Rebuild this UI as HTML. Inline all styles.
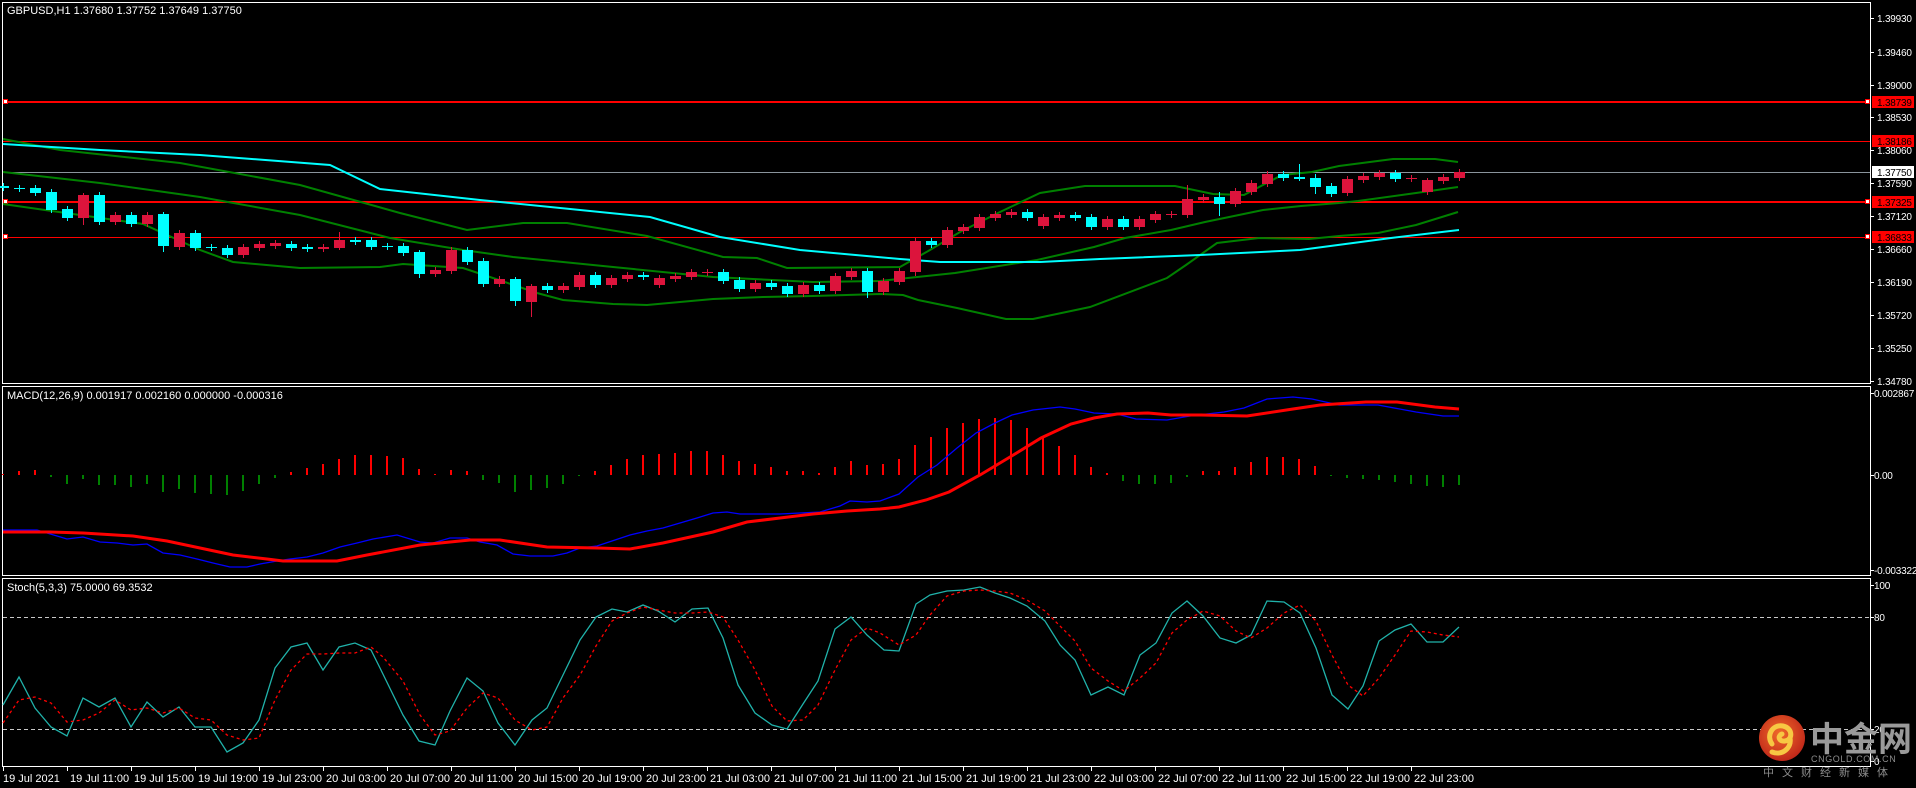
<!DOCTYPE html>
<html><head><meta charset="utf-8"><style>
html,body{margin:0;padding:0;background:#000;}
body{width:1916px;height:788px;overflow:hidden;position:relative;font-family:"Liberation Sans",Tahoma,sans-serif;}
svg{position:absolute;left:0;top:0;}
</style></head><body>
<svg id="s" width="1916" height="788" viewBox="0 0 1916 788" xmlns="http://www.w3.org/2000/svg" shape-rendering="crispEdges">
<rect width="1916" height="788" fill="#000"/>
</svg>
<script>
var s=document.getElementById('s');var NS='http://www.w3.org/2000/svg';
function el(t,a,txt){var e=document.createElementNS(NS,t);for(var k in a)e.setAttribute(k,a[k]);if(txt!==undefined)e.textContent=txt;s.appendChild(e);return e;}
function pl(pts,c,w,dash){el('polyline',{points:pts.map(function(p){return p.join(',')}).join(' '),fill:'none',stroke:c,'stroke-width':w,'stroke-dasharray':dash||'none','shape-rendering':'auto'});}
el('rect',{x:2.5,y:2.5,width:1868,height:381,fill:'none',stroke:'#fff'});
el('rect',{x:2.5,y:386.5,width:1868,height:189,fill:'none',stroke:'#fff'});
el('rect',{x:2.5,y:578.5,width:1868,height:188,fill:'none',stroke:'#fff'});
el('rect',{x:3,y:101,width:1867,height:2,fill:'#ff0000'});
el('rect',{x:3,y:141,width:1867,height:1,fill:'#ff0000'});
el('rect',{x:3,y:172,width:1867,height:1,fill:'#8a949c'});
el('rect',{x:3,y:201,width:1867,height:2,fill:'#ff0000'});
el('rect',{x:3,y:237,width:1867,height:1,fill:'#ff0000'});
[102,202,237].forEach(function(y){el('rect',{x:3.5,y:y-2.5,width:4,height:4,fill:'#fff',stroke:'#ff0000'});el('rect',{x:1865.5,y:y-2.5,width:4,height:4,fill:'#fff',stroke:'#ff0000'});});
pl([[3,139],[60,150],[180,163],[300,185],[400,213],[467,230],[523,223],[567,223],[647,236],[723,257],[757,258],[787,268],[900,267],[930,250],[960,232],[1000,212],[1040,193],[1085,186],[1175,186],[1213,194],[1244,195],[1282,175],[1312,172],[1339,166],[1393,159],[1435,159],[1458,162]],'#008000',2);
pl([[3,172],[100,183],[200,197],[300,215],[390,238],[463,250],[513,257],[613,267],[713,277],[813,282],[880,281],[955,273],[1037,260],[1094,247],[1125,238],[1171,230],[1205,222],[1263,210],[1301,206],[1339,203],[1358,201],[1416,193],[1458,187]],'#008000',2);
pl([[3,204],[143,224],[200,250],[233,262],[300,268],[380,267],[403,264],[463,268],[490,277],[537,293],[563,300],[613,304],[647,305],[713,299],[763,297],[813,296],[880,294],[903,295],[918,300],[957,308],[1006,319],[1033,319],[1090,307],[1167,278],[1186,265],[1217,243],[1259,238],[1309,239],[1339,236],[1378,233],[1416,225],[1458,212]],'#008000',2);
pl([[3,144],[100,150],[200,155],[330,165],[380,189],[480,200],[650,217],[720,237],[800,250],[900,259],[940,262],[1040,262],[1100,259],[1200,255],[1300,250],[1391,238],[1459,230]],'#00ffff',2);
var C=[['c',186,188],['c',188,189],['c',188,193],['c',192,210],['c',209,218],['r',195,218],['c',195,222],['r',215,222],['c',215,224],['r',215,224],
['c',214,246],['r',233,247],['c',233,248],['c',247,248],['c',248,255],['r',247,255],['r',244,248],['r',243,246],['c',244,248],['c',247,249],
['r',247,249],['r',240,248],['c',240,242],['c',240,247],['c',246,247],['c',246,253],['c',252,274],['r',270,274],['r',250,271],['c',250,262],
['c',261,284],['r',279,284],['c',279,301],['r',286,302],['c',286,290],['r',286,290],['r',275,287],['c',275,285],['r',278,285],['r',275,279],
['c',275,277],['r',278,285],['r',276,279],['r',272,277],['r',272,273],['c',272,281],['c',280,289],['r',283,289],['c',283,287],['c',286,294],
['r',285,294],['c',285,291],['r',276,291],['r',271,277],['c',271,292],['r',281,292],['r',271,282],['r',241,272],['c',241,245],['r',230,245],
['r',227,231],['r',217,228],['r',214,218],['r',212,215],['c',212,218],['r',217,226],['r',215,218],['c',215,218],['c',217,227],['r',219,227],
['c',219,227],['r',219,227],['r',214,220],['r',214,215],['r',199,215],['r',197,200],['c',197,204],['r',191,204],['r',183,192],['r',174,184],
['c',174,178],['c',177,179],['c',178,187],['c',186,194],['r',179,193],['r',176,180],['r',173,177],['c',173,179],['r',178,179],['r',180,192],
['r',177,181],['r',172,178]];
var W={5:[193,225],10:[212,252],26:[250,278],32:[277,306],33:[284,317],21:[232,250],54:[268,298],57:[238,276],76:[192,216],74:[185,218],81:[164,181],82:[174,194],89:[178,195]};
C.forEach(function(c,i){var x=3+16*i;var col=c[0]=='r'?'#dc143c':'#00ffff';var h=W[i]||[c[1]-3,c[2]+3];
el('rect',{x:x,y:h[0],width:1,height:h[1]-h[0],fill:col});
var bh=Math.max(1,c[2]-c[1]);el('rect',{x:x-5,y:c[1],width:11,height:bh,fill:col});});
var H=[1,4,5,-2,-9,-4,-10,-10,-12,-9,-17,-14,-18,-19,-20,-16,-9,-3,3,7,11,16,20,20,19,17,6,1,5,4,-5,-8,-17,-15,-13,-9,-1,4,10,16,20,21,22,24,24,20,14,11,8,4,4,2,8,14,10,11,16,30,38,47,52,56,57,55,47,38,29,20,8,2,-6,-9,-9,-8,-2,4,4,8,13,18,18,16,9,-1,-3,-4,-5,-7,-9,-11,-12,-10];
H.forEach(function(h,i){var x=2+16*i;if(h>=0)el('rect',{x:x,y:475-h,width:2,height:Math.max(h,1),fill:'#ff0000'});else el('rect',{x:x,y:475,width:2,height:-h,fill:'#008000'});});
pl([[3,530],[37,530],[67,539],[83,537],[100,542],[117,543],[133,545],[147,544],[163,553],[180,555],[197,559],[213,563],[230,567],[247,567],[260,564],[277,561],[290,559],[307,557],[323,553],[340,547],[357,543],[373,539],[397,535],[420,542],[433,543],[450,538],[467,538],[480,542],[497,545],[513,554],[530,556],[553,556],[567,553],[580,548],[597,546],[630,535],[647,531],[663,528],[680,523],[697,518],[713,513],[727,512],[740,514],[780,514],[820,512],[840,506],[850,501],[867,502],[880,501],[899,494],[918,477],[937,465],[957,448],[976,433],[995,423],[1012,415],[1033,410],[1060,407],[1075,409],[1094,413],[1117,414],[1136,419],[1167,420],[1190,416],[1224,412],[1244,408],[1267,399],[1293,397],[1312,399],[1339,405],[1378,405],[1416,412],[1443,416],[1459,416]],'#0000ff',1.3);
pl([[3,532],[50,532],[83,533],[133,536],[167,541],[200,548],[233,555],[267,559],[283,561],[337,561],[367,555],[420,545],[470,540],[500,540],[547,547],[597,548],[630,549],[663,543],[713,532],[747,522],[780,518],[813,514],[847,511],[880,509],[899,507],[926,500],[949,492],[980,475],[1010,457],[1041,438],[1071,424],[1094,418],[1117,414],[1148,413],[1171,415],[1201,415],[1247,416],[1293,409],[1320,405],[1366,402],[1397,402],[1435,407],[1459,409]],'#ff0000',3);
el('line',{x1:3,y1:617.5,x2:1870,y2:617.5,stroke:'#c8c8c8','stroke-dasharray':'4,3'});
el('line',{x1:3,y1:729.5,x2:1870,y2:729.5,stroke:'#c8c8c8','stroke-dasharray':'4,3'});
pl([[3,705],[19,677],[35,708],[51,727],[67,736],[83,698],[99,707],[115,698],[131,727],[147,702],[163,717],[179,707],[195,727],[211,727],[227,752],[243,743],[259,720],[275,668],[291,647],[307,643],[323,670],[339,647],[355,643],[371,650],[380,668],[403,715],[419,741],[435,745],[450,711],[467,678],[483,691],[498,723],[515,745],[532,720],[547,708],[563,675],[580,640],[596,617],[612,609],[627,612],[643,605],[658,611],[675,622],[692,609],[708,608],[723,638],[738,685],[755,713],[772,725],[787,729],[803,704],[818,681],[835,629],[851,617],[867,635],[884,650],[899,651],[916,604],[930,595],[947,591],[964,590],[980,587],[995,593],[1010,598],[1027,606],[1045,621],[1060,645],[1075,660],[1091,695],[1108,687],[1124,695],[1140,655],[1156,643],[1172,613],[1187,601],[1203,616],[1220,638],[1236,643],[1251,635],[1267,601],[1284,602],[1300,613],[1316,648],[1332,695],[1348,709],[1363,686],[1379,641],[1395,630],[1411,624],[1427,642],[1443,642],[1459,627]],'#20b2aa',1.3);
pl([[3,723],[19,700],[35,697],[51,703],[67,722],[83,720],[99,713],[115,700],[131,710],[147,708],[163,713],[179,708],[195,718],[211,720],[227,735],[243,740],[259,738],[275,700],[291,670],[307,654],[323,654],[339,653],[355,653],[371,647],[383,657],[403,681],[420,715],[435,735],[450,731],[467,708],[483,693],[498,698],[515,720],[532,730],[547,727],[563,698],[580,675],[596,646],[612,621],[627,613],[643,607],[658,610],[675,613],[692,613],[708,612],[723,617],[738,640],[755,670],[772,706],[787,721],[803,720],[818,705],[835,670],[851,640],[867,628],[880,633],[899,645],[916,635],[930,615],[947,596],[964,591],[980,590],[995,591],[1010,593],[1027,600],[1045,611],[1060,626],[1075,641],[1091,668],[1108,681],[1124,691],[1140,678],[1156,663],[1172,633],[1187,620],[1203,611],[1220,616],[1236,631],[1251,638],[1267,628],[1284,613],[1300,605],[1316,621],[1332,655],[1348,685],[1363,696],[1379,678],[1395,655],[1411,631],[1427,632],[1443,635],[1459,637]],'#ff0000',1.3,'3,3');
var P=[['1.39930',18],['1.39460',52],['1.39000',85],['1.38530',117],['1.38060',150],['1.37590',183],['1.37120',216],['1.36660',249],['1.36190',282],['1.35720',315],['1.35250',348],['1.34780',381]];
var F={fill:'#fff','font-size':'10','letter-spacing':'-0.2'};
function tx(x,y,c,t){el('text',{x:x,y:y,fill:c,'font-size':'10','letter-spacing':'-0.2'},t);}
P.forEach(function(p){el('rect',{x:1871,y:p[1],width:3,height:1,fill:'#fff'});tx(1877,p[1]+4,'#fff',p[0]);});
[['1.38739',102,'#ff0000'],['1.38186',141,'#ff0000'],['1.37325',202,'#ff0000'],['1.36833',237,'#ff0000'],['1.37750',172,'#ffffff']].forEach(function(p){el('rect',{x:1872,y:p[1]-6,width:42,height:12,fill:p[2]});tx(1877,p[1]+4,'#000',p[0]);});
[['0.002867',393],['0.00',475],['-0.003322',570],['100',585],['80',617],['20',729],['0',761]].forEach(function(p){el('rect',{x:1871,y:p[1],width:3,height:1,fill:'#fff'});tx(1874,p[1]+4,'#fff',p[0]);});
el('text',{x:7,y:14,fill:'#fff','font-size':'11'},'GBPUSD,H1  1.37680 1.37752 1.37649 1.37750');
el('text',{x:7,y:399,fill:'#fff','font-size':'11'},'MACD(12,26,9) 0.001917 0.002160 0.000000 -0.000316');
el('text',{x:7,y:591,fill:'#fff','font-size':'11'},'Stoch(5,3,3) 75.0000 69.3532');
var T=['19 Jul 2021','19 Jul 11:00','19 Jul 15:00','19 Jul 19:00','19 Jul 23:00','20 Jul 03:00','20 Jul 07:00','20 Jul 11:00','20 Jul 15:00','20 Jul 19:00','20 Jul 23:00','21 Jul 03:00','21 Jul 07:00','21 Jul 11:00','21 Jul 15:00','21 Jul 19:00','21 Jul 23:00','22 Jul 03:00','22 Jul 07:00','22 Jul 11:00','22 Jul 15:00','22 Jul 19:00','22 Jul 23:00'];
T.forEach(function(t,i){var x=3+64*i;el('rect',{x:x,y:767,width:1,height:4,fill:'#fff'});el('text',{x:x+(i==0?0:3),y:782,fill:'#fff','font-size':'11'},t);});
var g=el('defs',{});
g.innerHTML='<radialGradient id="lg" cx="45%" cy="40%" r="60%"><stop offset="0" stop-color="#f06a2a"/><stop offset="1" stop-color="#c0281a"/></radialGradient>';
el('circle',{cx:1782,cy:738,r:23,fill:'url(#lg)','shape-rendering':'auto'});
el('path',{d:'M1772 744 C1766 736 1772 724 1783 726 C1793 728 1793 740 1785 741 C1779 742 1777 736 1782 734 M1790 738 C1792 748 1782 756 1772 752',fill:'none',stroke:'#f7c843','stroke-width':5,'stroke-linecap':'round','shape-rendering':'auto'});
el('text',{x:1810,y:751,fill:'#9a9a9a','font-size':'34','font-weight':'bold','font-family':'"Noto Sans CJK SC",sans-serif'},'中金网');
el('text',{x:1811,y:762,fill:'#8c8c8c','font-size':'9','letter-spacing':'0.6'},'CNGOLD.COM.CN');
el('text',{x:1763,y:776,fill:'#8c8c8c','font-size':'11','letter-spacing':'8','font-family':'"Noto Sans CJK SC",sans-serif'},'中文财经新媒体');
</script>
</body></html>
